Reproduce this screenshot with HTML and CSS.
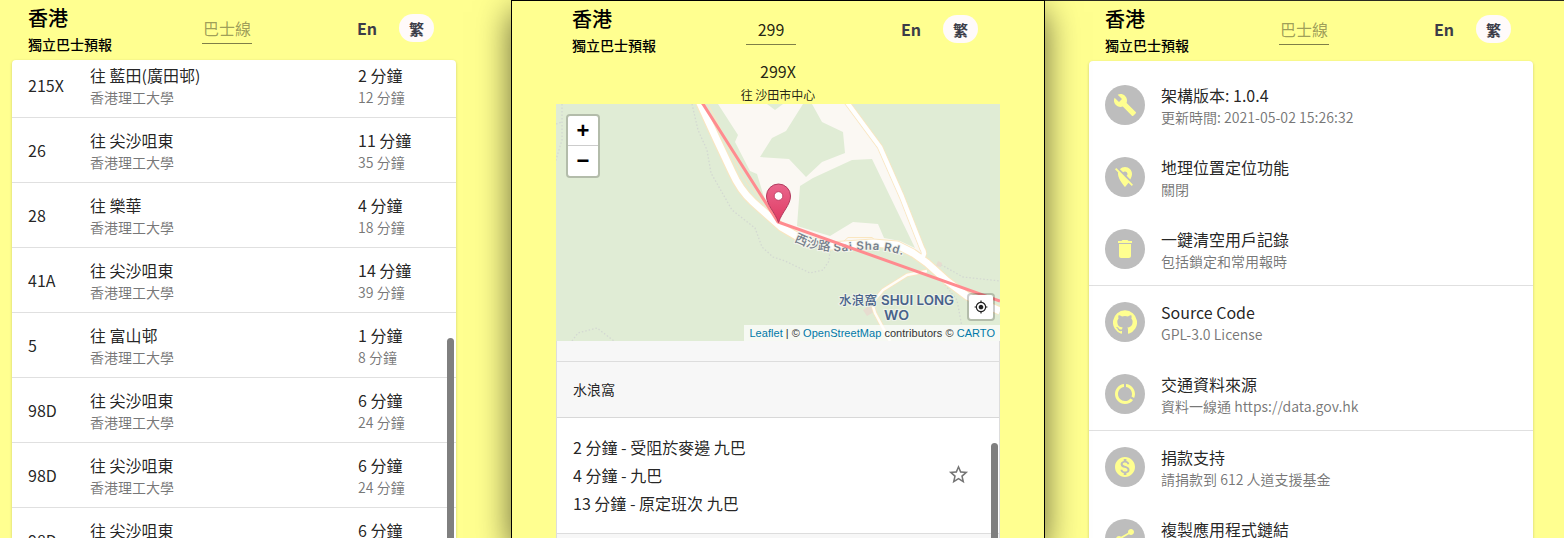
FILE: index.html
```
<!DOCTYPE html>
<html lang="zh-HK">
<head>
<meta charset="utf-8">
<title>香港獨立巴士預報</title>
<link rel="stylesheet" href="styles.css">
</head>
<body>
<main class="screens">
  <section class="screen screen-home">
    <header class="bar">
      <div class="brand"><h1>香港</h1><p>獨立巴士預報</p></div>
      <div class="search placeholder">巴士線</div>
      <nav class="lang"><span class="en">En</span><span class="pill">繁</span></nav>
    </header>
    <div class="card eta-card">
      <ul class="etas">
        <li><b>215X</b><div><p>往 藍田(廣田邨)</p><small>香港理工大學</small></div><div><p>2 分鐘</p><small>12 分鐘</small></div></li>
        <li><b>26</b><div><p>往 尖沙咀東</p><small>香港理工大學</small></div><div><p>11 分鐘</p><small>35 分鐘</small></div></li>
        <li><b>28</b><div><p>往 樂華</p><small>香港理工大學</small></div><div><p>4 分鐘</p><small>18 分鐘</small></div></li>
        <li><b>41A</b><div><p>往 尖沙咀東</p><small>香港理工大學</small></div><div><p>14 分鐘</p><small>39 分鐘</small></div></li>
        <li><b>5</b><div><p>往 富山邨</p><small>香港理工大學</small></div><div><p>1 分鐘</p><small>8 分鐘</small></div></li>
        <li><b>98D</b><div><p>往 尖沙咀東</p><small>香港理工大學</small></div><div><p>6 分鐘</p><small>24 分鐘</small></div></li>
        <li><b>98D</b><div><p>往 尖沙咀東</p><small>香港理工大學</small></div><div><p>6 分鐘</p><small>24 分鐘</small></div></li>
        <li><b>98D</b><div><p>往 尖沙咀東</p><small>香港理工大學</small></div><div><p>6 分鐘</p><small>24 分鐘</small></div></li>
      </ul>
      <i class="thumb"></i>
    </div>
  </section>

  <section class="screen screen-route">
    <header class="bar">
      <div class="brand"><h1>香港</h1><p>獨立巴士預報</p></div>
      <div class="search">299</div>
      <nav class="lang"><span class="en">En</span><span class="pill">繁</span></nav>
    </header>
    <div class="route-title"><h2>299X</h2><p>往 沙田市中心</p></div>
    <div class="map">
      <svg class="tiles" viewBox="0 0 444 237" width="444" height="237">
        <defs>
          <linearGradient id="pin" x1="0" y1="0" x2="0" y2="1"><stop offset="0" stop-color="#e9668c"/><stop offset="1" stop-color="#e03a62"/></linearGradient>
          <path id="road-label" d="M238 137C255 146 272 148 290 147C312 145 330 144 354 154"/>
        </defs>
        <rect width="444" height="237" fill="#e0ecd5"/>
        <path fill="#fbf8f3" d="M162 0L182 31L179 38L194 67L201 70L208 93L218 112L241 128L268 138L310 138L345 141L368 151L346 93L324 43L292 0Z"/>
        <path fill="#e0ecd5" d="M211 0L219 6L227 0ZM204 53L216 34L230 27L247 0H256L266 18L287 28L289 49L266 58L250 73L233 55ZM244 82L257 74L296 56L316 55L359 144L344 137L328 134L322 120L297 118L274 132L241 122Z"/>
        <g fill="none" stroke="#d3d8d2" stroke-width="1.3" stroke-dasharray="1.5 2">
          <path d="M6 0V36L-1 59M0 20L6 18M136 0L142 26L151 46L155 69L176 106L199 124L206 143L217 153L229 157L254 169L267 166L273 157L274 145"/>
          <path d="M16 237L22 229L41 224L58 237M382 159L407 173L444 177M387 178L401 196L406 223"/>
        </g>
        <path d="M382 157l4 2-1 4-5-1zM307 206l8-5 3 7-7 4z" fill="#e7dcd0"/>
        <g fill="none" stroke-linejoin="round">
          <path stroke="#fae6c0" stroke-width="1" d="M152 0L165 26L180 60L192 80L212 103M287 138L292 133.500H316L321 138"/>
          <path stroke="#fae6c0" stroke-width="4" d="M371 167L351 171L327 186L316 199L319 209L334 237"/>
          <path stroke="#fffdf8" stroke-width="2.600" d="M371 167L351 171L327 186L316 199L319 209L334 237"/>
          <path stroke="#fae6c0" stroke-width="6" d="M290 -3L324 43L346 93L366 144Q370 150 366 153"/>
          <path stroke="#fae6c0" stroke-width="9" d="M143 -3L160 34L176 68Q184 86 197 98L225 123L244 134L274 142L317 139L341 141L357 149L371 159L391 177L411 192L444 207"/>
          <path stroke="#fff" stroke-width="4.400" d="M290 -3L324 43L346 93L366 144Q370 150 366 153"/>
          <path stroke="#fff" stroke-width="7" d="M143 -3L160 34L176 68Q184 86 197 98L225 123L244 134L274 142L317 139L341 141L357 149L371 159L391 177L411 192L444 207"/>
        </g>
        <text class="road-name"><textPath href="#road-label"><tspan class="cjk">西沙路</tspan> Sai Sha Rd.</textPath></text>
        <g class="place-name">
          <text x="283" y="200.500" class="cjk" textLength="38">水浪窩</text>
          <text x="325" y="200.500" textLength="73" lengthAdjust="spacingAndGlyphs">SHUI LONG</text>
          <text x="328" y="216" textLength="25" lengthAdjust="spacingAndGlyphs">WO</text>
        </g>
        <path d="M144 -4L147 0L222 118L444 197" fill="none" stroke="#ff8b8f" stroke-width="3"/>
        <path d="M222.500 118.500C219 108 210.500 101 210.500 92A12 12 0 0 1 234.500 92C234.500 101 226 108 222.500 118.500Z" fill="url(#pin)" stroke="#b23b5e" stroke-width="1"/>
        <circle cx="222.500" cy="92" r="4.300" fill="#fff" stroke="#b8365b" stroke-width=".8"/>
      </svg>
      <div class="zoom"><span>+</span><span>−</span></div>
      <div class="locate"><svg viewBox="0 0 24 24" width="14" height="14"><path d="M12 8c-2.210 0-4 1.790-4 4s1.790 4 4 4 4-1.790 4-4-1.790-4-4-4zm8.940 3c-.46-4.170-3.770-7.480-7.940-7.940V1h-2v2.060C6.830 3.520 3.520 6.830 3.060 11H1v2h2.060c.46 4.170 3.770 7.480 7.940 7.940V23h2v-2.060c4.170-.46 7.480-3.770 7.940-7.940H23v-2h-2.060zM12 19c-3.870 0-7-3.130-7-7s3.130-7 7-7 7 3.130 7 7-3.130 7-7 7z"/></svg></div>
      <div class="credit"><a>Leaflet</a> | © <a>OpenStreetMap</a> contributors © <a>CARTO</a></div>
    </div>
    <div class="stops">
      <div class="stop-prev"></div>
      <div class="stop-name">水浪窩</div>
      <div class="stop-eta">
        <div><p>2 分鐘 - 受阻於麥邊 九巴</p><p>4 分鐘 - 九巴</p><p>13 分鐘 - 原定班次 九巴</p></div>
        <svg viewBox="0 0 24 24" width="23" height="23"><path d="M22 9.240l-7.190-.62L12 2 9.190 8.630 2 9.240l5.460 4.730L5.820 21 12 17.270 18.180 21l-1.630-7.030L22 9.240zM12 15.400l-3.760 2.270 1-4.280-3.320-2.880 4.380-.38L12 6.100l1.710 4.040 4.380.38-3.320 2.880 1 4.280L12 15.400z"/></svg>
      </div>
      <div class="stop-next"></div>
      <i class="thumb"></i>
    </div>
  </section>

  <section class="screen screen-settings">
    <header class="bar">
      <div class="brand"><h1>香港</h1><p>獨立巴士預報</p></div>
      <div class="search placeholder">巴士線</div>
      <nav class="lang"><span class="en">En</span><span class="pill">繁</span></nav>
    </header>
    <div class="card">
      <ul class="settings">
        <li><span class="avatar"><svg viewBox="0 0 24 24"><path d="M22.700 19l-9.100-9.100c.9-2.300.4-5-1.500-6.900-2-2-5-2.400-7.400-1.300L9 6 6 9 1.600 4.700C.4 7.100.9 10.100 2.900 12.100c1.900 1.900 4.600 2.400 6.900 1.500l9.100 9.100c.4.4 1 .4 1.400 0l2.300-2.300c.5-.4.5-1.100.1-1.400z"/></svg></span><div><p>架構版本: 1.0.4</p><small>更新時間: 2021-05-02 15:26:32</small></div></li>
        <li><span class="avatar"><svg viewBox="0 0 24 24"><path d="M12 6.500c1.380 0 2.500 1.120 2.500 2.500 0 .74-.33 1.390-.83 1.850l3.630 3.630c.98-1.860 1.700-3.800 1.700-5.480 0-3.870-3.130-7-7-7-1.980 0-3.760.83-5.040 2.150l3.190 3.190c.46-.52 1.110-.84 1.850-.84zm4.370 9.600l-4.630-4.630-.11-.11L3.270 3 2 4.270l3.180 3.180C5.070 7.950 5 8.470 5 9c0 5.250 7 13 7 13s1.670-1.850 3.380-4.350L18.730 21 20 19.730l-3.630-3.630z"/></svg></span><div><p>地理位置定位功能</p><small>關閉</small></div></li>
        <li class="divided"><span class="avatar"><svg viewBox="0 0 24 24"><path d="M6 19c0 1.100.9 2 2 2h8c1.100 0 2-.9 2-2V7H6v12zM19 4h-3.500l-1-1h-5l-1 1H5v2h14V4z"/></svg></span><div><p>一鍵清空用戶記錄</p><small>包括鎖定和常用報時</small></div></li>
        <li><span class="avatar"><svg viewBox="0 0 24 24"><path d="M12 .3a12 12 0 0 0-3.800 23.400c.6.1.8-.3.8-.6v-2c-3.300.7-4-1.600-4-1.600-.6-1.400-1.400-1.800-1.400-1.800-1-.7.1-.7.1-.7 1.200 0 1.900 1.200 1.900 1.200 1 1.800 2.800 1.300 3.500 1 0-.8.4-1.300.7-1.600-2.700-.3-5.500-1.300-5.500-6 0-1.200.5-2.300 1.300-3.100-.2-.4-.6-1.600 0-3.200 0 0 1-.3 3.400 1.200a11.500 11.500 0 0 1 6 0c2.300-1.500 3.300-1.200 3.300-1.200.6 1.600.2 2.800 0 3.200.9.8 1.300 1.900 1.300 3.200 0 4.600-2.800 5.600-5.500 5.900.5.400.9 1 .9 2.200v3.300c0 .3.1.7.8.6A12 12 0 0 0 12 .3"/></svg></span><div><p>Source Code</p><small>GPL-3.0 License</small></div></li>
        <li class="divided"><span class="avatar"><svg viewBox="0 0 24 24"><path d="M13 2.050v3.030c3.390.49 6 3.390 6 6.920 0 .9-.18 1.750-.48 2.540l2.600 1.530c.56-1.240.88-2.620.88-4.070 0-5.180-3.950-9.450-9-9.950zM12 19c-3.870 0-7-3.130-7-7 0-3.530 2.610-6.430 6-6.920V2.050c-5.060.5-9 4.760-9 9.950 0 5.520 4.470 10 9.990 10 3.310 0 6.240-1.610 8.060-4.090l-2.600-1.530C16.170 17.980 14.210 19 12 19z"/></svg></span><div><p>交通資料來源</p><small>資料一線通 https://data.gov.hk</small></div></li>
        <li><span class="avatar"><svg viewBox="0 0 24 24"><path d="M12 2C6.480 2 2 6.480 2 12s4.480 10 10 10 10-4.480 10-10S17.520 2 12 2zm1.410 16.090V20h-2.670v-1.930c-1.710-.36-3.160-1.460-3.270-3.400h1.960c.1 1.050.82 1.870 2.650 1.870 1.960 0 2.400-.98 2.400-1.590 0-.83-.44-1.610-2.670-2.140-2.480-.6-4.180-1.620-4.180-3.670 0-1.720 1.390-2.840 3.110-3.210V4h2.670v1.950c1.860.45 2.790 1.860 2.850 3.390H14.300c-.05-1.110-.64-1.870-2.220-1.870-1.500 0-2.400.68-2.400 1.640 0 .84.65 1.390 2.670 1.910s4.180 1.390 4.180 3.910c-.01 1.830-1.380 2.830-3.120 3.160z"/></svg></span><div><p>捐款支持</p><small>請捐款到 612 人道支援基金</small></div></li>
        <li><span class="avatar"><svg viewBox="0 0 24 24"><path d="M18 16.080c-.76 0-1.440.3-1.960.77L8.910 12.700c.05-.23.09-.46.09-.7s-.04-.47-.09-.7l7.050-4.110c.54.5 1.250.81 2.040.81 1.660 0 3-1.340 3-3s-1.340-3-3-3-3 1.340-3 3c0 .24.04.47.09.7L8.040 9.810C7.500 9.310 6.790 9 6 9c-1.660 0-3 1.340-3 3s1.340 3 3 3c.79 0 1.500-.31 2.040-.81l7.120 4.160c-.05.21-.08.43-.08.65 0 1.610 1.310 2.920 2.920 2.920s2.920-1.310 2.920-2.920-1.310-2.920-2.920-2.920z"/></svg></span><div><p>複製應用程式鏈結</p><small>&nbsp;</small></div></li>
      </ul>
    </div>
  </section>
</main>
</body>
</html>
```
FILE: styles.css
```
* { box-sizing: border-box; margin: 0; padding: 0; }
body {
  height: 538px;
  overflow: hidden;
  font-family: "Noto Sans CJK TC", "Noto Sans", sans-serif;
  color: rgba(0, 0, 0, .87);
  background: #ffff90;
}
ul { list-style: none; }
.screens { display: grid; grid-template-columns: 511px 534px 519px; height: 538px; }
.screen { height: 538px; overflow: hidden; background: #ffff90; }
.screen-home { padding-left: 12px; }
.screen-route {
  position: relative;
  z-index: 1;
  overflow: visible;
  padding: 0 44px;
  border: solid #000;
  border-width: 1px 1px 0;
  box-shadow: 0 12px 32px 0 rgba(0, 0, 0, .6);
}
.screen-settings { padding-left: 44px; border-top: 1px solid #2a2a20; }

.bar { display: flex; width: 444px; height: 60px; padding: 0 22px 0 16px; }
.brand { width: 174px; color: #000; }
.brand h1 { font-size: 20px; line-height: 32px; font-weight: 500; padding-top: 2px; }
.brand p { font-size: 14px; line-height: 20px; font-weight: 500; }
.search {
  width: 50px;
  height: 44px;
  padding-top: 16px;
  border-bottom: 1px solid rgba(0, 0, 0, .5);
  font-size: 16px;
  line-height: 24px;
  text-align: center;
}
.placeholder { color: rgba(0, 0, 0, .4); }
.lang { display: flex; margin-left: auto; padding-top: 14px; font-weight: 700; color: #3c3c48; line-height: 28px; }
.en { width: 42px; margin-right: -1px; position: relative; left: -1px; font-size: 16px; }
.pill { width: 35px; height: 28px; border-radius: 14px; background: #fffafa; font-size: 15px; line-height: 29px; text-align: center; }

.card {
  position: relative;
  width: 444px;
  height: 478px;
  overflow: hidden;
  background: #fff;
  border-radius: 4px 4px 0 0;
  box-shadow: 0 1px 3px rgba(0, 0, 0, .2);
}
.card p, .stop-eta p { font-size: 16px; line-height: 24px; }
.card small { display: block; font-size: 14px; line-height: 20px; color: rgba(0, 0, 0, .54); }
.etas { margin-top: -7px; }
.etas li {
  display: grid;
  grid-template-columns: 62px 268px 1fr;
  align-items: center;
  height: 65px;
  padding: 0 0 0 16px;
  border-bottom: 1px solid #e0e0e0;
}
.etas b { font-size: 16px; font-weight: 400; }
.thumb { position: absolute; right: 2px; top: 278px; width: 7px; height: 400px; border-radius: 4px; background: #7f7f7f; }

.route-title { height: 43px; text-align: center; }
.route-title h2 { font-size: 16px; line-height: 20px; font-weight: 400; }
.route-title p { font-size: 12px; line-height: 20px; padding-top: 4px; }
.map { position: relative; width: 444px; height: 237px; }
.tiles { display: block; }
.road-name { font: 600 11.5px Inter, "Noto Sans CJK TC", sans-serif; letter-spacing: .75px; fill: #76808c; stroke: #f4f5ee; stroke-width: 2px; paint-order: stroke; }
.place-name { font: 600 13px Inter, "Noto Sans CJK TC", sans-serif; fill: #48628a; stroke: #edf2e8; stroke-width: 2px; paint-order: stroke; }
.cjk { font-family: "Noto Sans CJK TC", sans-serif; font-weight: 500; font-size: 12.5px; letter-spacing: 0; }
.zoom, .locate { position: absolute; background: #fff; background-clip: padding-box; border: 2px solid rgba(0, 0, 0, .2); border-radius: 4px; }
.zoom { left: 10px; top: 10px; width: 34px; }
.zoom span { display: block; height: 30px; font: 700 22px/30px "Liberation Sans", sans-serif; color: #000; text-align: center; }
.zoom span:first-child { border-bottom: 1px solid #ccc; }
.locate { right: 5px; bottom: 20px; width: 28px; height: 28px; display: grid; place-items: center; }
.locate svg { fill: #222; }
.credit { position: absolute; right: 0; bottom: 0; height: 16px; padding: 0 5px; background: rgba(255, 255, 255, .7); font: 11px/16px "Liberation Sans", sans-serif; letter-spacing: .04px; color: #333; white-space: nowrap; }
.credit a { color: #0078a8; }
.stops { position: relative; height: 197px; overflow: hidden; border: solid #ddd; border-width: 0 1px; }
.stop-prev { height: 21px; background: #f7f7f7; border-bottom: 1px solid #ddd; }
.stop-name { height: 56px; padding-left: 16px; font-size: 14px; line-height: 55px; background: #f7f7f7; border-bottom: 1px solid #d8d8d8; }
.stop-eta { display: flex; align-items: center; justify-content: space-between; height: 116px; padding: 0 29px 2px 16px; background: #fff; border-bottom: 1px solid #ddd; }
.stop-eta p { line-height: 28px; }
.stop-eta svg { fill: #757575; }
.stop-next { height: 10px; background: #f7f7f7; }
.stops .thumb { right: 1px; top: 102px; }

.settings { padding-top: 8px; }
.settings li { display: flex; align-items: center; gap: 16px; height: 72px; padding-left: 16px; }
.settings .divided { height: 73px; border-bottom: 1px solid #e0e0e0; }
.avatar { display: grid; place-items: center; width: 40px; height: 40px; border-radius: 50%; background: #bdbdbd; }
.avatar svg { width: 24px; height: 24px; fill: #ffff90; }
```
